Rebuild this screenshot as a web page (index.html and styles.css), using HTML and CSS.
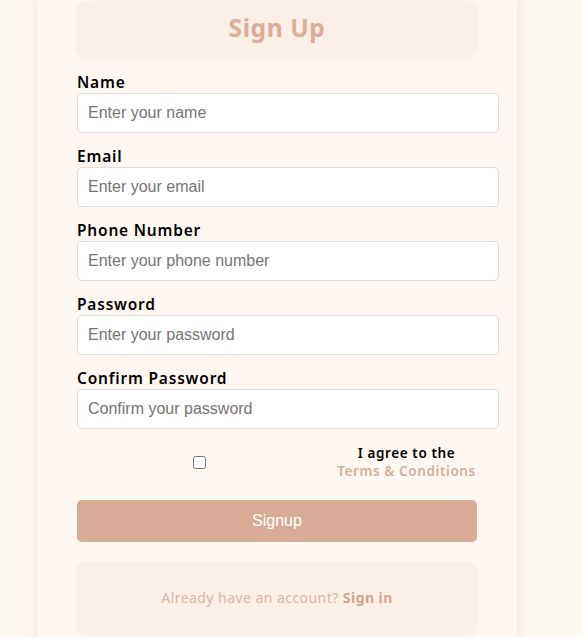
FILE: index.html
```html
<!DOCTYPE html>
<html lang="en">
<head>
<meta charset="utf-8">
<title>Sign Up</title>
<link rel="stylesheet" href="styles.css">
</head>
<body>
<div class="card">
  <div class="title-box"><h1 class="title">Sign Up</h1></div>
  <form class="form">
    <div class="field">
      <label class="label" for="name">Name</label>
      <input class="input" id="name" type="text" placeholder="Enter your name">
    </div>
    <div class="field">
      <label class="label" for="email">Email</label>
      <input class="input" id="email" type="email" placeholder="Enter your email">
    </div>
    <div class="field">
      <label class="label" for="phone">Phone Number</label>
      <input class="input" id="phone" type="tel" placeholder="Enter your phone number">
    </div>
    <div class="field">
      <label class="label" for="pw">Password</label>
      <input class="input" id="pw" type="password" placeholder="Enter your password">
    </div>
    <div class="field">
      <label class="label" for="pw2">Confirm Password</label>
      <input class="input" id="pw2" type="password" placeholder="Confirm your password">
    </div>
    <div class="agree">
      <div class="check-wrap"><input class="check" id="agree" type="checkbox"></div>
      <label class="agree-text" for="agree">I agree to the<br><span class="terms">Terms &amp; Conditions</span></label>
    </div>
    <button class="submit" type="button">Signup</button>
  </form>
  <div class="footer-box">
    <p class="footer-text">Already have an account? <span class="signin">Sign in</span></p>
  </div>
</div>
</body>
</html>
```
FILE: styles.css
```css
html, body {
  margin: 0;
  padding: 0;
  background: #fdf7f1;
}
body {
  font-family: "Noto Sans", "DejaVu Sans", sans-serif;
  height: 637px;
  overflow: hidden;
}
.card {
  width: 400px;
  margin-left: 37px;
  padding: 1px 40px 40px;
  background: #fff8f2;
  box-shadow: 0 0 8px rgba(160, 120, 90, 0.15);
  min-height: 700px;
}
.title-box {
  height: 54px;
  background: #f9efe6;
  border-radius: 8px;
  box-shadow: 0 2px 6px rgba(180, 140, 110, 0.12);
  display: flex;
  align-items: center;
  justify-content: center;
}
.title {
  margin: 0 0 2px;
  font-size: 24.5px;
  letter-spacing: 0.6px;
  font-weight: 700;
  color: #dcad98;
}
.form {
  margin-top: 18px;
  display: flex;
  flex-direction: column;
}
.field {
  display: flex;
  flex-direction: column;
  margin-bottom: 14px;
}
.label {
  font-size: 15.5px;
  letter-spacing: 0.8px;
  font-weight: 600;
  color: #000;
  line-height: 18px;
  margin-bottom: 2px;
}
.input {
  width: 400px;
  height: 18px;
  padding: 10px;
  border: 1px solid #ddd;
  border-radius: 5px;
  background: #fff;
  font-family: "Liberation Sans", Arial, sans-serif;
  font-size: 16px;
  outline: none;
}
.input::placeholder {
  color: #757575;
}
.agree {
  display: flex;
  align-items: center;
  margin-top: 1px;
}
.check-wrap {
  flex: 1;
  display: flex;
  justify-content: center;
  padding-right: 15px;
}
.check {
  margin: 0;
  width: 13px;
  height: 13px;
}
.agree-text {
  width: 141px;
  text-align: center;
  font-size: 13.5px;
  letter-spacing: 0.6px;
  font-weight: 600;
  line-height: 18px;
  color: #000;
}
.terms {
  color: #d9ad99;
}
.submit {
  margin-top: 20px;
  height: 42px;
  width: 400px;
  border: none;
  border-radius: 5px;
  background: #d8ab97;
  color: #fff;
  font-family: "Liberation Sans", Arial, sans-serif;
  font-size: 16px;
}
.footer-box {
  margin-top: 20px;
  height: 70px;
  background: #f9efe6;
  border-radius: 8px;
  box-shadow: 0 2px 6px rgba(180, 140, 110, 0.12);
  display: flex;
  align-items: center;
  justify-content: center;
}
.footer-text {
  margin: 0;
  font-size: 14px;
  letter-spacing: 0.45px;
  color: #dbb5a3;
}
.signin {
  font-weight: 700;
  color: #d4a591;
}
```
